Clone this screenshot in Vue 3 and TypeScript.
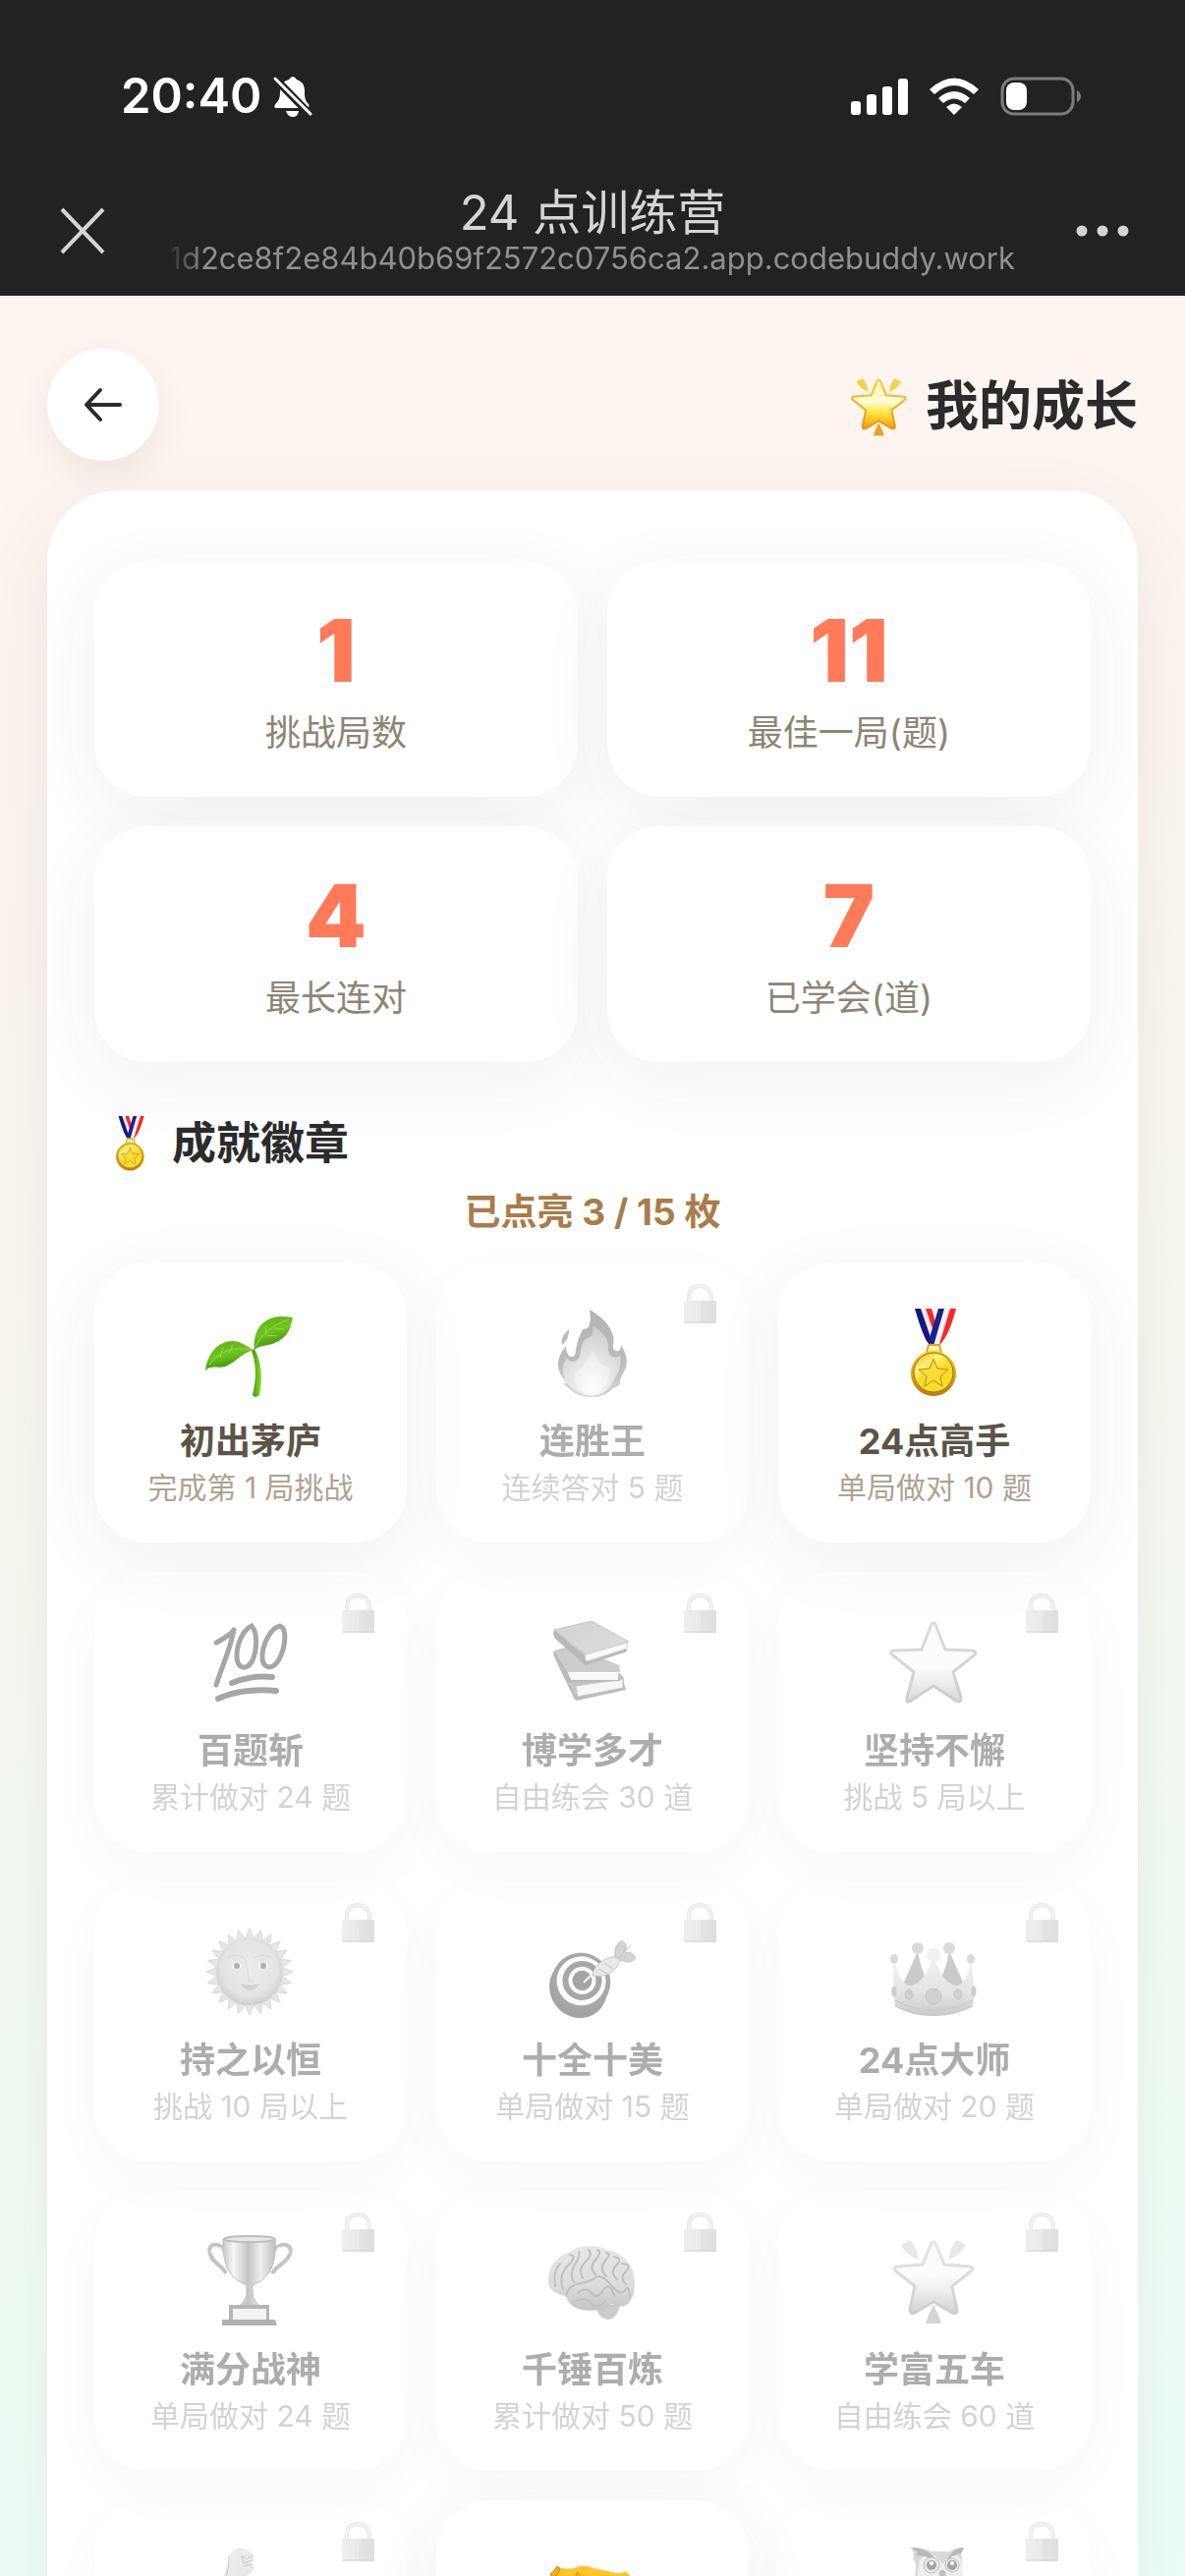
<script setup lang="ts">
interface Stat {
  value: number
  label: string
}

interface Badge {
  icon: string
  name?: string
  goal?: string
  locked: boolean
}

const pageUrl = '1d2ce8f2e84b40b69f2572c0756ca2.app.codebuddy.work'

const stats: Stat[] = [
  { value: 1, label: '挑战局数' },
  { value: 11, label: '最佳一局(题)' },
  { value: 4, label: '最长连对' },
  { value: 7, label: '已学会(道)' },
]

const badges: Badge[] = [
  { icon: 'sprout', name: '初出茅庐', goal: '完成第 1 局挑战', locked: false },
  { icon: 'fire', name: '连胜王', goal: '连续答对 5 题', locked: true },
  { icon: 'medal', name: '24点高手', goal: '单局做对 10 题', locked: false },
  { icon: 'hundred', name: '百题斩', goal: '累计做对 24 题', locked: true },
  { icon: 'books', name: '博学多才', goal: '自由练会 30 道', locked: true },
  { icon: 'star', name: '坚持不懈', goal: '挑战 5 局以上', locked: true },
  { icon: 'sun', name: '持之以恒', goal: '挑战 10 局以上', locked: true },
  { icon: 'target', name: '十全十美', goal: '单局做对 15 题', locked: true },
  { icon: 'crown', name: '24点大师', goal: '单局做对 20 题', locked: true },
  { icon: 'trophy', name: '满分战神', goal: '单局做对 24 题', locked: true },
  { icon: 'brain', name: '千锤百炼', goal: '累计做对 50 题', locked: true },
  { icon: 'glow', name: '学富五车', goal: '自由练会 60 道', locked: true },
  { icon: 'muscle', locked: true },
  { icon: 'handshake', locked: false },
  { icon: 'owl', locked: true },
]

/* Ring of triangular sun rays, alternating between two radii. */
function sunRays(count: number, outer: number, inner: number): string {
  const points: string[] = []
  for (let i = 0; i < count * 2; i++) {
    const angle = (Math.PI * i) / count - Math.PI / 2
    const radius = i % 2 === 0 ? outer : inner
    points.push(`${(44 + radius * Math.cos(angle)).toFixed(1)},${(45 + radius * Math.sin(angle)).toFixed(1)}`)
  }
  return points.join(' ')
}

const rays = sunRays(24, 44, 34)
</script>

<template>
  <div class="app">
    <svg class="sprite" width="0" height="0" aria-hidden="true">
      <defs>
        <linearGradient id="leaf" x1="0" y1="0" x2="0.4" y2="1">
          <stop offset="0" stop-color="#5cae12" /><stop offset="0.55" stop-color="#6fc51c" /><stop offset="1" stop-color="#3c8a08" />
        </linearGradient>
        <linearGradient id="stem" x1="0" x2="1">
          <stop offset="0" stop-color="#3f8f0c" /><stop offset="1" stop-color="#8ede2c" />
        </linearGradient>
        <linearGradient id="flameOuter" x1="0" y1="0" x2="0" y2="1">
          <stop offset="0" stop-color="#e8451c" /><stop offset="0.6" stop-color="#f0561c" /><stop offset="1" stop-color="#ff9a30" />
        </linearGradient>
        <radialGradient id="flameMid" cx="0.5" cy="0.85" r="0.8">
          <stop offset="0" stop-color="#fff8c8" /><stop offset="0.4" stop-color="#ffd25a" /><stop offset="1" stop-color="#f98a2c" />
        </radialGradient>
        <radialGradient id="flameCore" cx="0.5" cy="0.8" r="0.7">
          <stop offset="0" stop-color="#ffffff" /><stop offset="1" stop-color="#ffd866" />
        </radialGradient>
        <linearGradient id="goldRim" x1="0" y1="0" x2="0" y2="1">
          <stop offset="0" stop-color="#f5c91e" /><stop offset="1" stop-color="#bf7a12" />
        </linearGradient>
        <linearGradient id="goldFace" x1="0" y1="0" x2="0.6" y2="1">
          <stop offset="0" stop-color="#eeb516" /><stop offset="0.35" stop-color="#fff27a" /><stop offset="0.6" stop-color="#f7d923" /><stop offset="1" stop-color="#f6e02c" />
        </linearGradient>
        <linearGradient id="starFill" x1="0" y1="0" x2="0" y2="1">
          <stop offset="0" stop-color="#fff6a0" /><stop offset="0.45" stop-color="#fffcd8" /><stop offset="0.68" stop-color="#ffe43c" /><stop offset="1" stop-color="#f3960e" />
        </linearGradient>
        <linearGradient id="starEdge" x1="0" y1="0" x2="0" y2="1">
          <stop offset="0" stop-color="#f6cf3a" /><stop offset="1" stop-color="#e8921a" />
        </linearGradient>
        <linearGradient id="paleStar" x1="0" y1="0" x2="0" y2="1">
          <stop offset="0" stop-color="#fff6cc" /><stop offset="0.55" stop-color="#fffbe4" /><stop offset="0.75" stop-color="#f8dc88" /><stop offset="1" stop-color="#dca94a" />
        </linearGradient>
        <linearGradient id="paleEdge" x1="0" y1="0" x2="0" y2="1">
          <stop offset="0" stop-color="#dcb860" /><stop offset="1" stop-color="#c8953c" />
        </linearGradient>
        <linearGradient id="cover" x1="0" y1="0" x2="1" y2="1">
          <stop offset="0" stop-color="#86a8b4" /><stop offset="1" stop-color="#9fc2ce" />
        </linearGradient>
        <radialGradient id="sunFace" cx="0.5" cy="0.45" r="0.55">
          <stop offset="0" stop-color="#fbd684" /><stop offset="0.75" stop-color="#f2c468" /><stop offset="1" stop-color="#cf9538" />
        </radialGradient>
        <linearGradient id="crownBody" x1="0" y1="0" x2="0" y2="1">
          <stop offset="0" stop-color="#ffe493" /><stop offset="0.6" stop-color="#f0c766" /><stop offset="1" stop-color="#c08e30" />
        </linearGradient>
        <linearGradient id="cup" x1="0" x2="1">
          <stop offset="0" stop-color="#b98b2c" /><stop offset="0.2" stop-color="#fff0b0" /><stop offset="0.48" stop-color="#a8842c" /><stop offset="0.72" stop-color="#f8dd88" /><stop offset="1" stop-color="#a07820" />
        </linearGradient>
        <linearGradient id="brainFill" x1="0" y1="0" x2="0" y2="1">
          <stop offset="0" stop-color="#f0c6c8" /><stop offset="0.6" stop-color="#e4aeb1" /><stop offset="1" stop-color="#ae797c" />
        </linearGradient>
        <linearGradient id="skin" x1="0" y1="0" x2="1" y2="1">
          <stop offset="0" stop-color="#ffe07a" /><stop offset="1" stop-color="#e6b13a" />
        </linearGradient>
        <linearGradient id="lockBody" x1="0" x2="1">
          <stop offset="0" stop-color="#e8cf98" /><stop offset="0.5" stop-color="#e0c080" /><stop offset="0.55" stop-color="#c9a868" /><stop offset="1" stop-color="#c2a060" />
        </linearGradient>
      </defs>

      <symbol id="icon-sprout" viewBox="0 0 90 90" overflow="visible">
        <path d="M46 43C50 54 52 68 47 88Q50 92 54 88C58 70 56 54 49 41Z" fill="url(#stem)" />
        <path d="M-1 63C1 44 14 32 28 33C38 34 42 40 49 42C36 45 30 55 19 59C11 61 4 57-1 63Z" fill="url(#leaf)" />
        <path d="M49 42C47 25 55 9 76 8Q83 8 88 9C86 14 87 29 67 36C59 38 53 38 49 42Z" fill="url(#leaf)" />
        <path d="M3 57C14 43 28 38 46 42M14 50L17 40M23 45L27 37M50 39C55 28 66 17 84 11M60 26L61 17M69 20L79 21M61 27L72 28" fill="none" stroke="#9ad45c" stroke-width="1" />
      </symbol>

      <symbol id="icon-fire" viewBox="0 0 90 90" overflow="visible">
        <path d="M42 1C52 7 63 15 66 28C68 36 63 41 69 43C73 44 74 41 74 37C79 45 81 52 79 60C77 66 72 71 73 77Q70 80 66 81Q58 90 44 90Q30 90 22 82L15 76H19C14 70 10 64 10 57C10 49 14 43 18 38C18 44 20 49 24 49Q28 49 28 42C29 35 32 27 35 21L40 20C44 14 43 7 42 1Z" fill="url(#flameOuter)" />
        <path d="M45 17C53 23 62 29 61 40C60 49 69 52 73 48C76 60 68 69 64 78Q56 89 44 89Q28 88 18 75C13 66 14 56 19 50C22 56 30 55 32 48C34 38 35 30 42 29C46 26 46 21 45 17Z" fill="url(#flameMid)" />
        <path d="M44 42C50 48 50 56 58 58C67 61 61 72 58 79Q52 88 44 88Q31 87 27 74C24 65 34 62 37 56C41 51 43 47 44 42Z" fill="url(#flameCore)" />
        <path d="M21 21Q22 30 14 37Q12 28 21 21Z" fill="#ee5a24" />
      </symbol>

      <symbol id="icon-medal" viewBox="0 0 90 90" overflow="visible">
        <path d="M36 0H42L50 26L44 36Z" fill="#ff2525" />
        <path d="M31 0H36L46 29L42 37L36 25Z" fill="#ececec" />
        <path d="M25 0H31L41 29V38L37 33Q32 24 25 0Z" fill="#15187c" />
        <path d="M60 0H67Q60 26 52 35L47 38Z" fill="#ff2525" />
        <path d="M55 0H61L50 36L44 38L43 31Z" fill="#f4f4f4" />
        <path d="M49 0H55L44 38L39 33Z" fill="#1c2288" />
        <path d="M39 37H50L52 45H37Z" fill="#fff0b0" stroke="#e2a91c" stroke-width="2" />
        <circle cx="44" cy="66" r="23" fill="url(#goldRim)" />
        <circle cx="44" cy="65" r="20" fill="url(#goldFace)" stroke="#a46b10" stroke-width="1" />
        <path d="M44 51L48 61L59 62L51 69L53 79L44 73L35 79L37 69L29 62L40 61Z" fill="#f8dc35" stroke="#b98c25" stroke-width="1" />
      </symbol>

      <symbol id="icon-hundred" viewBox="0 0 90 90" overflow="visible">
        <g fill="none" stroke="#c42434" stroke-linecap="round">
          <path d="M28 12C24 18 17 21 10 25M28 12C24 33 16 49 10 68" stroke-width="5" />
          <path d="M46 8C37 12 31 27 31 38C31 52 41 54 47 43C51 34 53 15 46 8Z" stroke-width="5" />
          <path d="M75 8C65 10 58 26 57 37C56 52 67 54 74 42C80 31 83 11 75 8Z" stroke-width="5" />
          <path d="M26 66Q45 58 67 60" stroke-width="6" />
          <path d="M12 82Q36 71 71 74" stroke-width="6" />
        </g>
      </symbol>

      <symbol id="icon-books" viewBox="0 0 90 90" overflow="visible">
        <path d="M6 40L28 77L77 66L79 73L29 84Q26 83 25 79Z" fill="#5f8044" />
        <path d="M73 56L77 61V66L26 77L20 62Z" fill="#6f9052" />
        <path d="M28 69L76 62V71L30 80Z" fill="#f2f0e8" stroke="#8a8a80" stroke-width="1" />
        <path d="M6 33L24 28L72 48L73 55H20Z" fill="#7da262" />
        <path d="M6 33Q4 36 7 41L20 66L73 64V61H22L20 55Z" fill="#5d7c45" />
        <path d="M21 56H71V63H23Z" fill="#f2f0e8" />
        <path d="M6 12L44 3L82 24L38 37Z" fill="url(#cover)" stroke="#6f93a0" stroke-width="1" />
        <path d="M6 12Q4 16 7 21L38 48L80 34V31L39 44L36 37Z" fill="#54717c" />
        <path d="M38 37L80 25V31L39 44Q36 40 38 37Z" fill="#f4f4f0" stroke="#9aa0a0" stroke-width="1" />
      </symbol>

      <symbol id="icon-star" viewBox="0 0 90 90" overflow="visible">
        <path d="M44 5Q46 5 47 9L56 32L83 33Q90 34 85 38L64 55L72 81Q72 87 67 84L44 69L21 84Q16 87 17 81L24 55L3 38Q-2 34 4 33L32 32L41 9Q42 5 44 5Z" fill="url(#paleStar)" stroke="url(#paleEdge)" stroke-width="3" stroke-linejoin="round" />
      </symbol>

      <symbol id="icon-sun" viewBox="0 0 90 90" overflow="visible">
        <polygon :points="rays" fill="#eccb84" stroke="#d8b060" stroke-width="1" />
        <circle cx="44" cy="45" r="34" fill="url(#sunFace)" />
        <path d="M22 31Q30 25 39 31Q42 42 43 52Q45 57 48 54M49 31Q58 25 66 31" fill="none" stroke="#dba850" stroke-width="1" />
        <ellipse cx="31" cy="39" rx="5" ry="3" fill="#fff6e0" /><ellipse cx="58" cy="39" rx="5" ry="3" fill="#fff6e0" />
        <circle cx="31" cy="39" r="3" fill="#7a5522" /><circle cx="58" cy="39" r="3" fill="#7a5522" />
        <path d="M36 59Q44 61 53 59Q45 69 36 59Z" fill="#d59d48" />
        <path d="M35 58Q44 61 54 58" fill="none" stroke="#b07a2c" stroke-width="1" />
      </symbol>

      <symbol id="icon-target" viewBox="0 0 90 90" overflow="visible">
        <g transform="rotate(-28 31 58)">
          <ellipse cx="29" cy="61" rx="29" ry="31" fill="#a42428" />
          <ellipse cx="34" cy="57" rx="30" ry="30" fill="#b42a30" />
          <ellipse cx="35" cy="56" rx="25" ry="25" fill="#fafafa" />
          <ellipse cx="36" cy="56" rx="20" ry="20" fill="#b42a30" />
          <ellipse cx="36" cy="56" rx="14" ry="14" fill="#fafafa" />
          <ellipse cx="36" cy="56" rx="10" ry="10" fill="#a8282e" />
        </g>
        <path d="M36 56L48 44" stroke="#f0f0f0" stroke-width="2" />
        <path d="M45 49C46 39 54 32 69 29L73 33C69 46 58 51 45 49Z" fill="#d8d2c0" stroke="#8f8f85" stroke-width="1" />
        <path d="M68 30Q66 18 75 13Q82 18 78 26Q85 23 89 31Q84 38 73 33Z" fill="#a0a6a3" stroke="#84908c" stroke-width="1" />
        <path d="M70 32L84 18M51 42L60 47M57 36L66 42" stroke="#888" stroke-width="1" />
      </symbol>

      <symbol id="icon-crown" viewBox="0 0 90 90" overflow="visible">
        <path d="M12 60L28 24Q33 53 44 60Q55 53 60 24L76 60L68 70H20Z" fill="#b8903c" />
        <path d="M4 33C8 49 13 58 20 59C32 58 38 45 44 29C50 45 56 58 68 59C75 58 80 49 82 33L86 63L84 80Q67 90 44 90Q20 90 5 80L3 62Z" fill="url(#crownBody)" />
        <g fill="#d8b462"><ellipse cx="4" cy="32" rx="4" ry="5" /><circle cx="28" cy="21" r="6" /><circle cx="60" cy="21" r="6" /><ellipse cx="82" cy="32" rx="4" ry="5" /></g>
        <circle cx="44" cy="28" r="7" fill="#f8e0a0" />
        <g fill="#c09c58" stroke="#a98a4c" stroke-width="1"><ellipse cx="44" cy="70" rx="8" ry="8" /><ellipse cx="19" cy="68" rx="4" ry="5" /><ellipse cx="69" cy="68" rx="4" ry="5" /><ellipse cx="4" cy="65" rx="2" ry="5" /><ellipse cx="85" cy="65" rx="2" ry="5" /></g>
        <path d="M5 74Q22 84 44 84T84 74M5 80Q22 89 44 89T84 80" fill="none" stroke="#b08a3a" stroke-width="1" />
      </symbol>

      <symbol id="icon-trophy" viewBox="0 0 90 90" overflow="visible">
        <path d="M20 16C13 4 0 6 4 17C6 27 15 27 20 37M67 16C74 4 89 6 85 17C82 27 73 27 67 37" fill="none" stroke="#a8832c" stroke-width="4" />
        <path d="M20 16C14 7 3 9 5 17M67 16C73 7 86 9 84 17" fill="none" stroke="#f6e0a0" stroke-width="1" />
        <path d="M17 2H70C72 27 65 42 47 49V58Q48 66 56 71H32Q40 66 41 58V49C23 42 16 27 17 2Z" fill="url(#cup)" stroke="#9a7828" stroke-width="1" />
        <ellipse cx="44" cy="2" rx="26" ry="3" fill="#e8cf8a" stroke="#96772c" stroke-width="2" />
        <path d="M23 69H64V86H23Z" fill="#7b6644" />
        <path d="M27 73H61V84H27Z" fill="#f0ead8" />
        <path d="M16 84H70L72 90H16Z" fill="#6e5c3e" />
      </symbol>

      <symbol id="icon-brain" viewBox="0 0 90 90" overflow="visible">
        <path d="M47 68Q50 82 60 84Q70 84 73 69Z" fill="#bb898a" />
        <path d="M0 47C-1 31 8 20 22 15C31 8 49 7 60 13C75 15 87 28 88 44Q89 60 81 68Q74 73 65 68C55 75 40 77 28 72Q20 68 18 60Q2 57 0 47Z" fill="url(#brainFill)" />
        <g fill="none" stroke="#a87074" stroke-width="2" stroke-linecap="round">
          <path d="M7 50Q4 36 12 27M15 53Q10 39 20 29T22 18M26 46Q21 37 27 28T31 15M35 42Q30 32 38 25T41 13M48 38Q41 31 48 23T50 13M59 40Q51 32 58 24T59 16M70 43Q62 36 69 29T67 20M79 48Q72 42 79 35T75 27" />
          <path d="M18 60Q20 49 32 47T49 41T64 49T78 54T83 61M30 57Q38 50 44 57T56 54T67 60M26 66Q36 60 43 67T58 65" />
        </g>
      </symbol>

      <symbol id="icon-glow" viewBox="0 0 90 90" overflow="visible">
        <path d="M11 8L20 3Q28 11 28 23Q16 18 11 8ZM77 8L68 3Q60 11 60 23Q72 18 77 8Z" fill="#f2d34c" />
        <path d="M44 5Q46 5 47 8L55 28L81 30Q86 31 82 35L63 50L68 74Q68 79 63 77L44 66L25 77Q20 79 20 74L25 50L6 35Q2 31 7 30L33 28L41 8Q42 5 44 5Z" fill="url(#starFill)" stroke="url(#starEdge)" stroke-width="3" stroke-linejoin="round" />
        <path d="M44 69Q49 78 52 88H36Q39 78 44 69Z" fill="#f0a01e" />
      </symbol>

      <symbol id="icon-muscle" viewBox="0 0 90 90" overflow="visible">
        <path d="M22 14Q23 5 33 1Q41 2 48 8V14L45 17Q51 19 47 25L40 31L39 48Q54 38 68 46Q83 54 86 78Q60 92 20 84Q10 54 22 14Z" fill="url(#skin)" />
        <path d="M47 14L38 17L36 9L41 13L47 9M46 18L38 20M19 34Q24 20 23 10" fill="none" stroke="#b98930" stroke-width="1" />
      </symbol>

      <symbol id="icon-handshake" viewBox="0 0 90 90" overflow="visible">
        <path d="M2 28Q6 26 9 20Q16 24 26 22Q36 17 46 22L70 27Q75 28 79 25L84 31L90 55L76 67L48 80L10 59L1 45Z" fill="#ffc52a" />
        <path d="M2 28Q6 26 9 20L12 23Q10 29 6 33ZM30 26Q25 32 26 42Q36 43 42 32L72 56" fill="#f4ab17" stroke="#cf8a10" stroke-width="1" />
      </symbol>

      <symbol id="icon-owl" viewBox="0 0 90 90" overflow="visible">
        <path d="M26 18Q22 11 24 7L21 1Q34 1 41 5H60Q67 1 75 1L72 7Q74 13 73 20L76 70Q60 92 36 80Q22 70 26 18Z" fill="#c5af8c" />
        <path d="M29 20Q29 7 45 9L53 18L62 9Q74 8 73 22V32H27Z" fill="#e6dcc8" />
        <path d="M21 1Q40 1 50 18Q38 8 25 9L28 6ZM75 1Q63 1 56 17Q62 8 72 7Z" fill="#7b6a50" />
        <circle cx="42" cy="19" r="8" fill="#e0cda8" stroke="#8f7b5a" stroke-width="1" /><circle cx="63" cy="19" r="7" fill="#e0cda8" stroke="#8f7b5a" stroke-width="1" />
        <circle cx="42" cy="19" r="5" fill="#50432f" /><circle cx="63" cy="19" r="5" fill="#50432f" />
        <circle cx="42" cy="17" r="2" fill="#fff" /><circle cx="63" cy="17" r="2" fill="#fff" />
        <path d="M49 27Q53 20 57 27L54 36Z" fill="#8b7858" />
      </symbol>

      <symbol id="icon-lock" viewBox="0 0 33 40">
        <path d="M5 20V14Q5 2 16 2T28 14V20" fill="none" stroke="#b8b8b8" stroke-width="4" />
        <path d="M5 20V14Q5 2 16 2T28 14V20" fill="none" stroke="#dedede" stroke-width="2" />
        <rect y="17" width="33" height="23" rx="1" fill="url(#lockBody)" />
        <path d="M1 39H32" stroke="#a08850" stroke-width="1" />
      </symbol>
    </svg>

    <header class="chrome">
      <div class="status">
        <div class="clock">
          <span>20:40</span>
          <svg width="40" height="44" viewBox="0 0 40 44" role="img" aria-label="静音">
            <path d="M9 34H33Q38 34 36 30Q32 26 32 20V15Q31 7 24 5Q20-1 16 5Q7 7 7 18Q7 26 3 29Q-1 34 4 34Z" fill="#fff" />
            <path d="M13 37H26Q25 43 20 43T13 37Z" fill="#fff" />
            <path d="M1 3L39 42" stroke="#222" stroke-width="8" />
            <path d="M2 4L38 40" stroke="#fff" stroke-width="3" stroke-linecap="round" />
          </svg>
        </div>
        <div class="signals">
          <svg width="58" height="38" viewBox="0 0 58 38" fill="#fff" aria-hidden="true">
            <rect y="24" width="10" height="14" rx="3" /><rect x="16" y="17" width="10" height="21" rx="3" />
            <rect x="32" y="9" width="10" height="29" rx="3" /><rect x="48" y="1" width="10" height="37" rx="3" />
          </svg>
          <svg width="50" height="38" viewBox="0 0 50 38" fill="#fff" aria-hidden="true">
            <path d="M0 12Q25-11 50 12L45 17Q25-1 5 17Z" />
            <path d="M9 21Q25 7 41 21L36 26Q25 17 14 26Z" />
            <path d="M17 30Q25 23 33 30L25 38Z" />
          </svg>
          <svg width="82" height="40" viewBox="0 0 82 40" aria-hidden="true">
            <rect x="2" y="2" width="72" height="36" rx="12" fill="none" stroke="#7c7c7c" stroke-width="3" />
            <rect x="6" y="6" width="21" height="28" rx="8" fill="#fff" />
            <path d="M78 14Q82 16 82 20T78 26Z" fill="#7c7c7c" />
          </svg>
        </div>
      </div>
      <div class="nav">
        <button class="icon-button close" type="button" aria-label="关闭">
          <svg width="46" height="46" viewBox="0 0 46 46"><path d="M2 1L44 45M44 1L2 45" stroke="#d5d5d5" stroke-width="4" /></svg>
        </button>
        <div class="heading">
          <div class="page-title">24 点训练营</div>
          <div class="page-url">{{ pageUrl }}</div>
        </div>
        <button class="icon-button more" type="button" aria-label="更多">
          <svg width="54" height="12" viewBox="0 0 54 12" fill="#d5d5d5"><circle cx="6" cy="6" r="5.5" /><circle cx="27" cy="6" r="5.5" /><circle cx="48" cy="6" r="5.5" /></svg>
        </button>
      </div>
    </header>

    <main class="page">
      <div class="topbar">
        <button class="back" type="button" aria-label="返回">
          <svg width="40" height="34" viewBox="0 0 40 34" fill="none" stroke="#2b2b2b" stroke-width="4" stroke-linecap="round" stroke-linejoin="round"><path d="M37 17H3M17 2L3 17L17 32" /></svg>
        </button>
        <h1 class="title">
          <svg width="62" height="62" aria-hidden="true"><use href="#icon-glow" /></svg>
          <span>我的成长</span>
        </h1>
      </div>

      <section class="panel">
        <div class="stats">
          <div v-for="stat in stats" :key="stat.label" class="stat">
            <strong>{{ stat.value }}</strong>
            <span>{{ stat.label }}</span>
          </div>
        </div>

        <h2 class="section-title">
          <svg width="56" height="56" aria-hidden="true"><use href="#icon-medal" /></svg>
          <span>成就徽章</span>
        </h2>
        <p class="progress">已点亮 3 / 15 枚</p>

        <ul class="badges">
          <li v-for="badge in badges" :key="badge.icon" class="badge" :class="{ locked: badge.locked }">
            <svg v-if="badge.locked" class="lock" width="33" height="40" aria-hidden="true"><use href="#icon-lock" /></svg>
            <svg class="badge-icon" width="90" height="90" aria-hidden="true"><use :href="`#icon-${badge.icon}`" /></svg>
            <h3 v-if="badge.name">{{ badge.name }}</h3>
            <p v-if="badge.goal">{{ badge.goal }}</p>
          </li>
        </ul>
      </section>
    </main>
  </div>
</template>

<style>
body {
  margin: 0;
  background: #222222;
}
</style>

<style scoped>
.app {
  display: flex;
  flex-direction: column;
  height: 100vh;
  overflow: hidden;
  font-family: Inter, "Noto Sans CJK SC", sans-serif;
  color: #2b2b2b;
}

.app *,
.app {
  box-sizing: border-box;
}

.sprite {
  position: absolute;
}

svg {
  display: block;
  flex: none;
  overflow: visible;
}

h1,
h2,
h3,
p,
ul {
  margin: 0;
  padding: 0;
}

button {
  padding: 0;
  border: 0;
  cursor: pointer;
}

.chrome {
  flex: none;
  background: #222222;
  padding-top: 68px;
}

.status {
  display: flex;
  align-items: center;
  justify-content: space-between;
  height: 60px;
  padding: 0 106px 0 123px;
}

.clock {
  display: flex;
  align-items: center;
  gap: 12px;
  color: #ffffff;
  font-size: 49px;
  font-weight: 600;
  line-height: 60px;
}

.signals {
  display: flex;
  align-items: center;
  gap: 22px;
}

.nav {
  display: grid;
  grid-template-columns: 168px minmax(0, 1fr) 168px;
  align-items: center;
  padding: 61px 0 20px;
}

.icon-button {
  background: none;
}

.close {
  justify-self: start;
  margin-left: 61px;
}

.more {
  justify-self: end;
  margin-right: 57px;
}

.heading {
  text-align: center;
}

.page-title {
  color: #d5d5d5;
  font-size: 49px;
  line-height: 56px;
}

.page-url {
  display: flex;
  justify-content: flex-end;
  overflow: hidden;
  padding-right: 5px;
  color: #909090;
  font-size: 31px;
  line-height: 36px;
  white-space: nowrap;
  mask-image: linear-gradient(to right, transparent, #000000 42px);
}

.page {
  flex: 1;
  min-height: 0;
  overflow: hidden;
  padding: 54px 48px 0;
  background: linear-gradient(170deg, #fff5f0 0%, #fdf5ef 20%, #f8f8f1 48%, #f1fcf4 75%, #ecfff8 100%);
}

.topbar {
  display: flex;
  align-items: center;
  justify-content: space-between;
  margin-bottom: 30px;
}

.back {
  display: flex;
  align-items: center;
  justify-content: center;
  width: 114px;
  height: 114px;
  border-radius: 50%;
  background: #ffffff;
  box-shadow: 0 12px 36px rgba(60, 50, 40, 0.08);
}

.title {
  display: flex;
  align-items: center;
  gap: 16px;
  padding-top: 4px;
  font-size: 54px;
  font-weight: 700;
  line-height: 64px;
}

.panel {
  padding: 72px 48px;
  border-radius: 72px;
  background: #ffffff;
  box-shadow: 0 24px 96px rgba(60, 50, 40, 0.08);
}

.stats {
  display: grid;
  grid-template-columns: repeat(2, minmax(0, 1fr));
  gap: 30px;
}

.stat {
  display: flex;
  flex-direction: column;
  align-items: center;
  padding: 41px 0;
  border-radius: 54px;
  background: #ffffff;
  box-shadow: 0 18px 72px rgba(60, 50, 40, 0.07);
}

.stat strong {
  color: #ff7a59;
  font-size: 88px;
  font-weight: 900;
  line-height: 100px;
}

.stat span {
  margin-top: 10px;
  color: #8d8574;
  font-size: 36px;
  line-height: 48px;
}

.section-title {
  display: flex;
  align-items: center;
  gap: 14px;
  margin-top: 53px;
  padding-left: 9px;
  font-size: 45px;
  font-weight: 700;
  line-height: 60px;
}

.progress {
  margin: 16px 0 27px;
  color: #a97c4a;
  font-size: 37px;
  font-weight: 700;
  line-height: 48px;
  text-align: center;
}

.badges {
  display: grid;
  grid-template-columns: repeat(3, minmax(0, 1fr));
  grid-auto-rows: minmax(285px, auto);
  gap: 30px;
  list-style: none;
}

.badge {
  position: relative;
  display: flex;
  flex-direction: column;
  align-items: center;
  padding: 47px 0 36px;
  border-radius: 54px;
  background: #ffffff;
  box-shadow: 0 18px 72px rgba(60, 50, 40, 0.07);
}

.badge h3 {
  margin-top: 21px;
  color: #5c5446;
  font-size: 36px;
  font-weight: 700;
  line-height: 48px;
}

.badge p {
  margin-top: 5px;
  color: #b0a290;
  font-size: 30px;
  line-height: 36px;
}

.locked {
  filter: grayscale(1);
  opacity: 0.48;
}

.lock {
  position: absolute;
  top: 22px;
  right: 33px;
  opacity: 0.7;
}
</style>
